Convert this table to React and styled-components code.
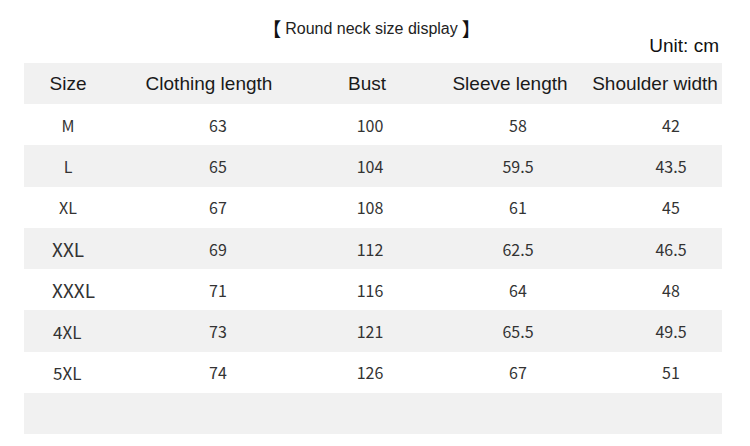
import styled, { createGlobalStyle } from "styled-components";

const Global = createGlobalStyle`
  html, body {
    margin: 0;
    padding: 0;
    background: #fff;
  }
`;

const Page = styled.div`
  width: 750px;
  height: 446px;
  overflow: hidden;
  background: #fff;
  box-sizing: border-box;
  padding: 15px 31px 0 24px;
`;

const Title = styled.div`
  display: flex;
  justify-content: center;
  align-items: center;
  height: 27px;
  font-family: "Liberation Sans", Arial, sans-serif;
  font-size: 16px;
  color: #222;
`;

const Bracket = styled.span`
  font-family: "Noto Sans CJK SC", sans-serif;
  font-size: 19px;
  line-height: 1;
  color: #111;
  margin: ${(p) => (p.right ? "0 0 0 4px" : "0 4px 0 0")};
`;

const Unit = styled.div`
  text-align: right;
  height: 22px;
  line-height: 18px;
  margin: -5px 0 4px;
  font-family: "Liberation Sans", Arial, sans-serif;
  font-size: 19px;
  color: #111;
`;

const Table = styled.div`
  display: flex;
  flex-direction: column;
  width: 698px;
`;

const Row = styled.div`
  display: grid;
  grid-template-columns: 88px 212px 92px 204px 102px;
  height: ${(p) => p.h || 41.3}px;
  align-items: center;
  background: ${(p) => (p.shade ? "#f1f1f1" : "#fff")};
`;

const Head = styled.div`
  display: flex;
  justify-content: center;
  white-space: nowrap;
  padding-right: ${(p) => p.shift || 0}px;
  font-family: "Liberation Sans", Arial, sans-serif;
  font-size: 19px;
  color: #1a1a1a;
`;

const Cell = styled.div`
  display: flex;
  justify-content: center;
  white-space: nowrap;
  font-family: "Noto Sans CJK SC", "Noto Sans", sans-serif;
  font-size: 16px;
  color: #333;
`;

const SizeCell = styled(Cell)`
  font-size: ${(p) => p.fs || 16}px;
  justify-content: ${(p) => (p.left ? "flex-start" : "center")};
  padding-left: ${(p) => p.pl || 0}px;
`;

const heads = [
  ["Size", 0],
  ["Clothing length", 18],
  ["Bust", 6],
  ["Sleeve length", 16],
  ["Shoulder width", 32],
];

const rows = [
  { size: "M", fs: 16, vals: ["63", "100", "58", "42"] },
  { size: "L", fs: 16, vals: ["65", "104", "59.5", "43.5"] },
  { size: "XL", fs: 16, vals: ["67", "108", "61", "45"] },
  { size: "XXL", fs: 19, left: true, pl: 28, vals: ["69", "112", "62.5", "46.5"] },
  { size: "XXXL", fs: 19, left: true, pl: 28, vals: ["71", "116", "64", "48"] },
  { size: "4XL", fs: 17, left: true, pl: 29, vals: ["73", "121", "65.5", "49.5"] },
  { size: "5XL", fs: 17, left: true, pl: 29, vals: ["74", "126", "67", "51"] },
];

export default function App() {
  return (
    <>
      <Global />
      <Page>
        <Title>
          <Bracket>【</Bracket>
          Round neck size display
          <Bracket right>】</Bracket>
        </Title>
        <Unit>Unit: cm</Unit>
        <Table>
          <Row shade h={41}>
            {heads.map(([t, s]) => (
              <Head key={t} shift={s}>
                {t}
              </Head>
            ))}
          </Row>
          {rows.map((r, i) => (
            <Row key={r.size} shade={i % 2 === 1}>
              <SizeCell fs={r.fs} left={r.left} pl={r.pl}>
                {r.size}
              </SizeCell>
              {r.vals.map((v, j) => (
                <Cell key={j}>{v}</Cell>
              ))}
            </Row>
          ))}
          <Row shade />
        </Table>
      </Page>
    </>
  );
}
